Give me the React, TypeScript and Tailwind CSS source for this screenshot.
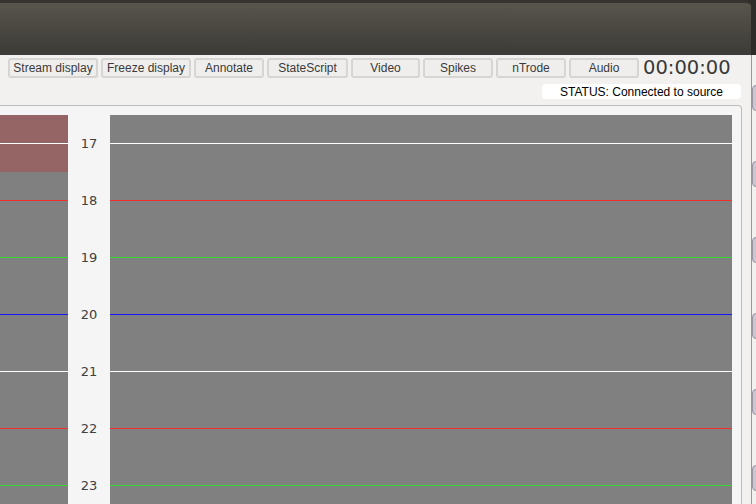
const buttons = [
  { label: "Stream display", w: "w-[90px]" },
  { label: "Freeze display", w: "w-[90px]" },
  { label: "Annotate", w: "w-[70px]" },
  { label: "StateScript", w: "w-[81px]" },
  { label: "Video", w: "w-[69px]" },
  { label: "Spikes", w: "w-[70px]" },
  { label: "nTrode", w: "w-[70px]" },
  { label: "Audio", w: "w-[70px]" },
];

const lineColors = ["bg-white", "bg-[#f52c2c]", "bg-[#32dc32]", "bg-[#1515ff]", "bg-white", "bg-[#f52c2c]", "bg-[#32dc32]"];
const labels = ["17", "18", "19", "20", "21", "22", "23"];

function Plot({ width, shadeFirst }: { width: string; shadeFirst?: boolean }) {
  return (
    <div className={`${width} flex flex-col bg-[#808080] shrink-0`}>
      {lineColors.map((c, i) => (
        <div key={i} className={`h-[57px] shrink-0 pt-[28px] ${shadeFirst && i === 0 ? "bg-[#956464]" : ""}`}>
          <div className={`h-px ${c}`} />
        </div>
      ))}
    </div>
  );
}

export default function App() {
  return (
    <div className="w-[756px] h-[504px] overflow-hidden flex bg-[#2e2d2a] font-['Liberation_Sans',Arial,sans-serif]">
      <div className="w-[751px] shrink-0 flex flex-col">
        {/* title bar */}
        <div className="h-[55px] shrink-0 rounded-tr-[6px] border-t-[3px] border-[#35342f] bg-gradient-to-b from-[#58554c] to-[#3c3b37]" />

        <div className="flex-1 bg-[#f2f1f0] flex flex-col">
          {/* toolbar */}
          <div className="h-[26px] flex items-center pl-[8px] gap-[3px]">
            {buttons.map((b) => (
              <div
                key={b.label}
                className={`${b.w} h-[20px] shrink-0 flex items-center justify-center rounded-[3px] border-2 border-[#d6d5d3] bg-[#efeeed] text-[12px] text-[#3a3a3a] whitespace-nowrap`}
              >
                {b.label}
              </div>
            ))}
            <div className="ml-[1px] shrink-0 text-[19.5px] leading-none text-[#3a3a3a] font-['DejaVu_Sans',sans-serif] whitespace-nowrap">
              00:00:00
            </div>
          </div>

          {/* status */}
          <div className="h-[24px] flex items-start pt-[3px] justify-end pr-[10px]">
            <div className="w-[199px] h-[15px] rounded-[4px] bg-white flex items-center justify-center text-[12px] text-black">
              STATUS: Connected to source
            </div>
          </div>

          {/* panel */}
          <div className="flex-1 mr-[9px] border-t border-r border-[#bdbcba] rounded-tr-[4px] bg-[#f5f5f5] pt-[9px] pr-[9px] flex overflow-hidden">
            <Plot width="w-[68px]" shadeFirst />
            <div className="w-[42px] shrink-0 flex flex-col">
              {labels.map((l) => (
                <div key={l} className="h-[57px] shrink-0 flex items-center justify-center text-[13px] text-[#404040] font-['DejaVu_Sans',sans-serif]">
                  {l}
                </div>
              ))}
            </div>
            <Plot width="flex-1" />
          </div>
        </div>
      </div>

      {/* neighbouring window edge */}
      <div className="flex-1 flex flex-col">
        <div className="h-[55px] bg-[#2e2d2a]" />
        <div className="flex-1 bg-[#f2f1f0] border-l border-[#9a9896] flex flex-col gap-[50px] pt-[30px] overflow-hidden">
          {[0, 1, 2, 3, 4, 5, 6, 7].map((i) => (
            <div key={i} className="w-[8px] h-[26px] rounded-full border border-[#9c94a2] bg-[#cbc6cf] shrink-0" />
          ))}
        </div>
      </div>
    </div>
  );
}
